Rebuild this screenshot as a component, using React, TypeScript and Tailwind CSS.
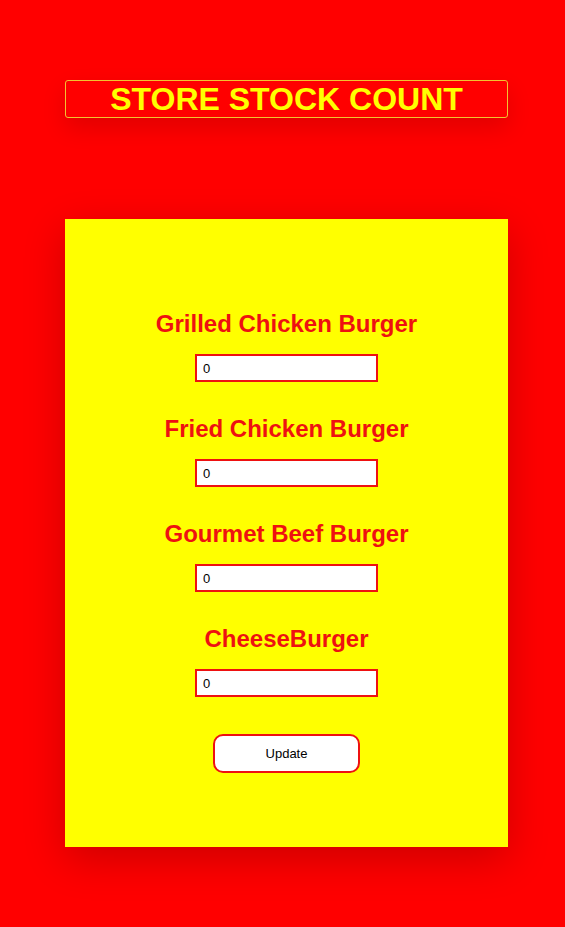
import React, { useState } from 'react';

const ITEMS = ['Grilled Chicken Burger', 'Fried Chicken Burger', 'Gourmet Beef Burger', 'CheeseBurger'];

export default function App() {
    const [counts, setCounts] = useState<string[]>(ITEMS.map(() => '0'));

    return (
        <div className="min-h-[927px] bg-[#ff0000] pt-[80px] pb-[80px] font-['Liberation_Sans',Arial,sans-serif]">
            {/* Header */}
            <div className="ml-[65px] w-[443px] h-[38px] flex items-center justify-center border border-[#f2c230] rounded-[3px] shadow-[0_10px_24px_rgba(0,0,0,0.12)]">
                <h1 className="text-[32px] font-bold leading-none text-[#ffff00]">STORE STOCK COUNT</h1>
            </div>

            {/* Stock card */}
            <div className="ml-[65px] w-[443px] mt-[101px] h-[628px] bg-[#ffff00] pt-[91px] flex flex-col items-center shadow-[0_12px_40px_rgba(0,0,0,0.2)]">
                {ITEMS.map((item, i) => (
                    <div key={item} className="flex flex-col items-center mb-[33px]">
                        <h2 className="text-[24px] font-bold leading-[28px] text-[#ee1111] mb-[16px]">{item}</h2>
                        <input
                            type="text"
                            value={counts[i]}
                            onChange={(e) => setCounts(counts.map((c, j) => (j === i ? e.target.value : c)))}
                            className="w-[183px] h-[28px] bg-white border-2 border-[#ee1111] px-[6px] text-[13px] text-black outline-none"
                        />
                    </div>
                ))}
                <button className="mt-[4px] w-[147px] h-[39px] bg-white border-2 border-[#ee1111] rounded-[10px] text-[13px] text-black">
                    Update
                </button>
            </div>
        </div>
    );
}
